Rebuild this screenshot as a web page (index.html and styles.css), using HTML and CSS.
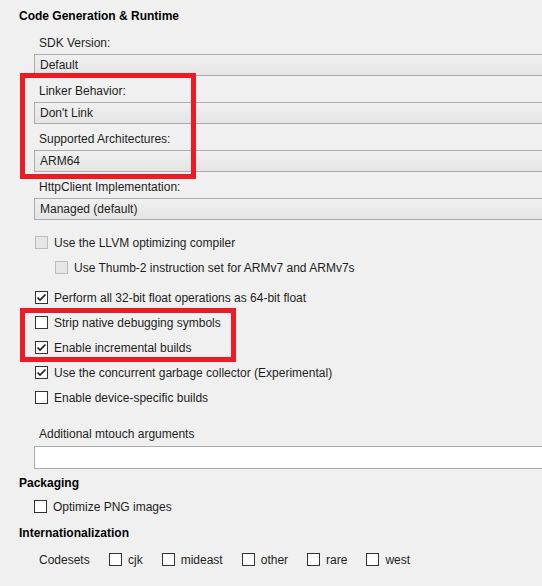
FILE: index.html
```html
<!DOCTYPE html>
<html lang="en">
<head>
  <meta charset="UTF-8">
  <title>iOS Build Options</title>
  <link rel="stylesheet" href="styles.css">
</head>
<body>
  <div class="panel">
    <h3 class="section">Code Generation &amp; Runtime</h3>

    <div class="field">
      <label>SDK Version:</label>
      <div class="select">Default</div>
    </div>
    <div class="field">
      <label>Linker Behavior:</label>
      <div class="select">Don't Link</div>
    </div>
    <div class="field">
      <label>Supported Architectures:</label>
      <div class="select">ARM64</div>
    </div>
    <div class="field">
      <label>HttpClient Implementation:</label>
      <div class="select">Managed (default)</div>
    </div>

    <div class="checks">
      <div class="check disabled"><span class="box"></span>Use the LLVM optimizing compiler</div>
      <div class="check disabled sub"><span class="box"></span>Use Thumb-2 instruction set for ARMv7 and ARMv7s</div>
      <div class="check spaced"><span class="box on"><svg width="11" height="11" viewBox="0 0 11 11"><path d="M1.5 5.5 L4 8 L9.5 2.5" fill="none" stroke="#1e1e1e" stroke-width="1.7"/></svg></span>Perform all 32-bit float operations as 64-bit float</div>
      <div class="check"><span class="box"></span>Strip native debugging symbols</div>
      <div class="check"><span class="box on"><svg width="11" height="11" viewBox="0 0 11 11"><path d="M1.5 5.5 L4 8 L9.5 2.5" fill="none" stroke="#1e1e1e" stroke-width="1.7"/></svg></span>Enable incremental builds</div>
      <div class="check"><span class="box on"><svg width="11" height="11" viewBox="0 0 11 11"><path d="M1.5 5.5 L4 8 L9.5 2.5" fill="none" stroke="#1e1e1e" stroke-width="1.7"/></svg></span>Use the concurrent garbage collector (Experimental)</div>
      <div class="check"><span class="box"></span>Enable device-specific builds</div>
    </div>

    <div class="field args">
      <label>Additional mtouch arguments</label>
      <div class="textbox"></div>
    </div>

    <h3 class="section next">Packaging</h3>
    <div class="check pkg"><span class="box"></span>Optimize PNG images</div>

    <h3 class="section next">Internationalization</h3>
    <div class="codesets">
      <span class="codesets-label">Codesets</span>
      <span class="opt"><span class="box"></span>cjk</span>
      <span class="opt"><span class="box"></span>mideast</span>
      <span class="opt"><span class="box"></span>other</span>
      <span class="opt"><span class="box"></span>rare</span>
      <span class="opt"><span class="box"></span>west</span>
    </div>

    <!-- annotation frames -->
    <div class="mark mark-top"></div>
    <div class="mark mark-bottom"></div>
  </div>
</body>
</html>
```

FILE: styles.css
```css
body {
  margin: 0;
  background: #f0f0f0;
  font-family: "Segoe UI", "Liberation Sans", Arial, sans-serif;
  font-size: 12px;
  color: #1e1e1e;
  overflow: hidden;
}

.panel {
  position: relative;
  padding: 8px 0 0 19px;
  height: 578px;
}

.section {
  margin: 0;
  font-size: 12px;
  font-weight: bold;
  line-height: 16px;
  color: #000;
}

.section.next {
  margin-top: 6px;
}

.field {
  margin-top: 6px;
  margin-left: 15px;
}

.section + .field {
  margin-top: 10px;
}

.field label {
  display: block;
  padding: 1px 0 0 5px;
  line-height: 16px;
}

.select {
  margin-top: 3px;
  height: 22px;
  box-sizing: border-box;
  border: 1px solid #acacac;
  border-right: none;
  background: linear-gradient(#f0f0f0, #e5e5e5);
  padding-left: 5px;
  line-height: 21px;
}

.checks {
  margin-top: 10px;
}

.check {
  display: flex;
  align-items: center;
  height: 25px;
  margin-left: 16px;
}

.check.sub {
  margin-left: 36px;
}

.check.spaced {
  margin-top: 5px;
}

.box {
  width: 13px;
  height: 13px;
  box-sizing: border-box;
  border: 1px solid #333;
  background: #fff;
  margin-right: 6px;
  display: flex;
  align-items: center;
  justify-content: center;
  flex: none;
}

.disabled .box {
  border-color: #bcbcbc;
  background: #e6e6e6;
}

.args {
  margin-top: 15px;
}

.args .textbox {
  margin-top: 4px;
}

.textbox {
  height: 23px;
  box-sizing: border-box;
  border: 1px solid #acacac;
  border-right: none;
  background: #fff;
}

.check.pkg {
  margin-top: 3px;
  margin-left: 15px;
}

.codesets {
  display: flex;
  align-items: center;
  height: 25px;
  margin-top: 6px;
  margin-left: 20px;
}

.codesets-label {
  width: 70px;
}

.opt {
  display: flex;
  align-items: center;
  margin-right: 19px;
}

.mark {
  position: absolute;
  left: 20px;
  border: 5px solid #ed1c24;
  box-sizing: border-box;
}

.mark-top {
  top: 73px;
  width: 176px;
  height: 106px;
}

.mark-bottom {
  top: 308px;
  width: 216px;
  height: 54px;
}
```
